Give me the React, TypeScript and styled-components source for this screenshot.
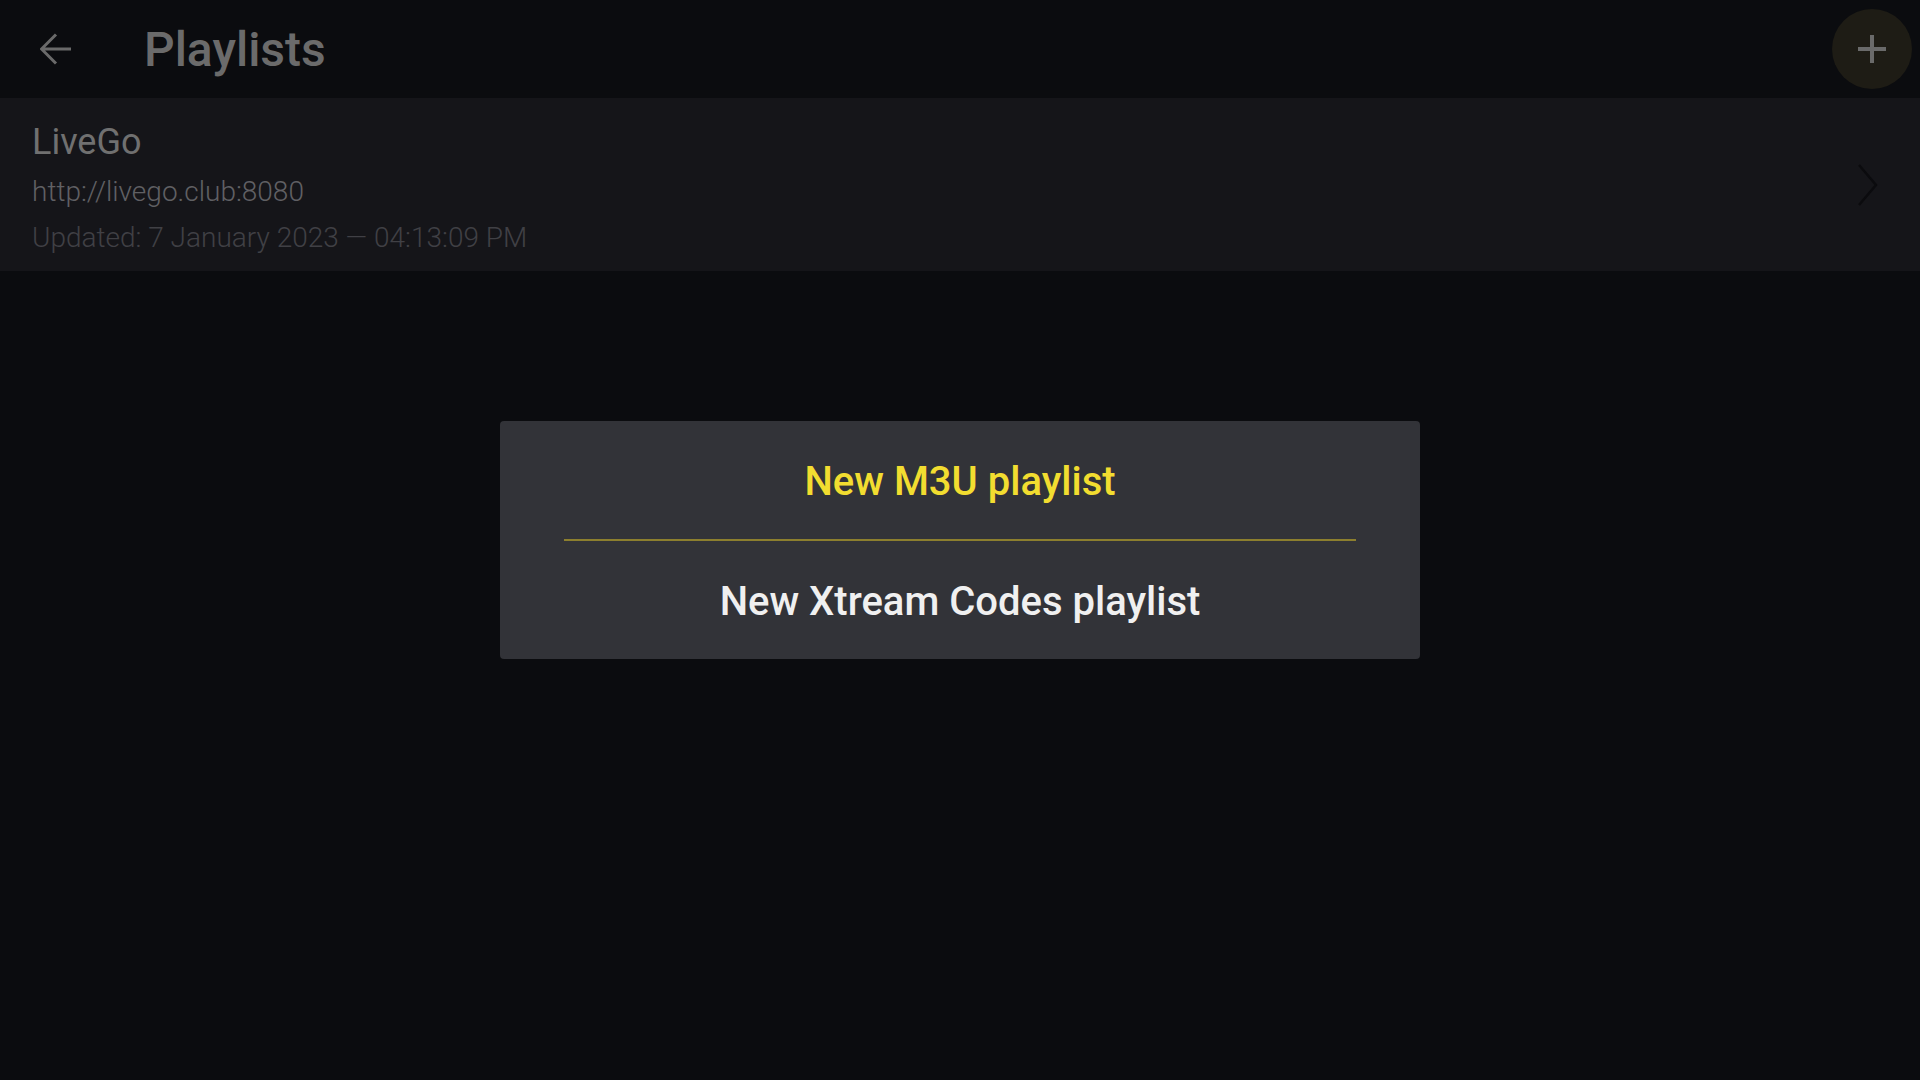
import React from "react";
import styled, { createGlobalStyle } from "styled-components";

const GlobalStyle = createGlobalStyle`
  html, body {
    margin: 0;
    padding: 0;
    background: #0b0c0f;
    font-family: Roboto, "Liberation Sans", sans-serif;
  }
  * { box-sizing: border-box; }
`;

const Page = styled.div`
  width: 100%;
  min-height: 100vh;
  display: flex;
  flex-direction: column;
  background: #0b0c0f;
`;

const Header = styled.header`
  height: 98px;
  display: flex;
  align-items: center;
  padding-left: 40px;
  padding-right: 8px;
  background: #0b0c0f;
`;

const BackButton = styled.button`
  width: 32px;
  height: 32px;
  padding: 0;
  border: 0;
  background: transparent;
  display: flex;
  align-items: center;
  justify-content: center;
  color: #6a6a6a;
`;

const Title = styled.h1`
  margin: 0 0 0 72px;
  font-size: 48px;
  font-weight: 500;
  color: #6b6b6b;
  line-height: normal;
`;

const AddButton = styled.button`
  margin-left: auto;
  width: 80px;
  height: 80px;
  border-radius: 50%;
  border: 0;
  padding: 0;
  background: #1e1c15;
  display: flex;
  align-items: center;
  justify-content: center;
  color: #6a6a6a;
`;

const PlaylistRow = styled.div`
  height: 173px;
  background: #151519;
  display: flex;
  align-items: center;
  padding: 0 42px 0 32px;
`;

const RowInfo = styled.div`
  flex: 1;
  display: flex;
  flex-direction: column;
  padding-top: 8px;
`;

const Name = styled.div`
  font-size: 36px;
  line-height: 42px;
  color: #707070;
`;

const Detail = styled.div<{ $dim?: boolean }>`
  font-size: 28px;
  font-weight: 300;
  line-height: 38px;
  margin-top: ${(p) => (p.$dim ? "8px" : "10px")};
  color: ${(p) => (p.$dim ? "#404045" : "#606064")};
`;

const Overlay = styled.div`
  position: fixed;
  inset: 0;
  display: flex;
  align-items: center;
  justify-content: center;
`;

const Dialog = styled.div`
  width: 920px;
  height: 238px;
  background: #323338;
  border-radius: 4px;
  display: flex;
  flex-direction: column;
`;

const Option = styled.div<{ $active?: boolean }>`
  flex: 1;
  display: flex;
  align-items: center;
  justify-content: center;
  padding-top: 3px;
  font-size: 40px;
  font-weight: 500;
  color: ${(p) => (p.$active ? "#f2dd30" : "#f0f0f0")};
`;

const Divider = styled.div`
  height: 2px;
  margin: 0 64px;
  background: #8c7f2e;
`;

export default function App() {
  return (
    <>
      <GlobalStyle />
      <Page>
        <Header>
          <BackButton aria-label="Back">
            <svg width="32" height="32" viewBox="0 0 32 32" fill="none">
              <path
                d="M31 16H2.5M16 1.5L1.5 16L16 30.5"
                stroke="currentColor"
                strokeWidth="3"
              />
            </svg>
          </BackButton>
          <Title>Playlists</Title>
          <AddButton aria-label="Add playlist">
            <svg width="28" height="28" viewBox="0 0 28 28">
              <rect x="12" y="0" width="4" height="28" fill="currentColor" />
              <rect x="0" y="12" width="28" height="4" fill="currentColor" />
            </svg>
          </AddButton>
        </Header>
        <PlaylistRow>
          <RowInfo>
            <Name>LiveGo</Name>
            <Detail>http://livego.club:8080</Detail>
            <Detail $dim>Updated: 7 January 2023 — 04:13:09 PM</Detail>
          </RowInfo>
          <svg width="20" height="42" viewBox="0 0 20 42" fill="none">
            <path d="M1 1L18 21L1 41" stroke="#0b0b0e" strokeWidth="2.5" />
          </svg>
        </PlaylistRow>
        <Overlay>
          <Dialog>
            <Option $active>New M3U playlist</Option>
            <Divider />
            <Option>New Xtream Codes playlist</Option>
          </Dialog>
        </Overlay>
      </Page>
    </>
  );
}
